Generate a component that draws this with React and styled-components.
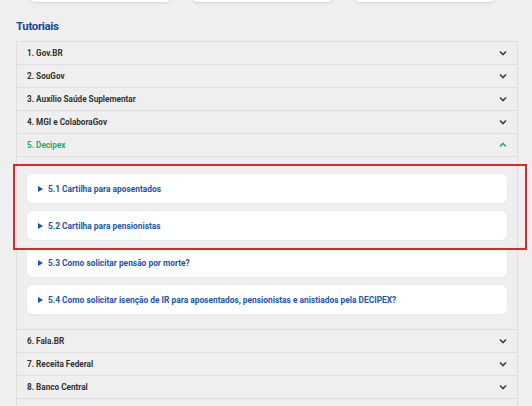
import React from 'react';
import styled, { createGlobalStyle } from 'styled-components';

const sections = [
    { id: 1, title: '1. Gov.BR' },
    { id: 2, title: '2. SouGov' },
    { id: 3, title: '3. Auxílio Saúde Suplementar' },
    { id: 4, title: '4. MGI e ColaboraGov' },
    {
        id: 5,
        title: '5. Decipex',
        open: true,
        items: [
            '5.1 Cartilha para aposentados',
            '5.2 Cartilha para pensionistas',
            '5.3 Como solicitar pensão por morte?',
            '5.4 Como solicitar isenção de IR para aposentados, pensionistas e anistiados pela DECIPEX?'
        ]
    },
    { id: 6, title: '6. Fala.BR' },
    { id: 7, title: '7. Receita Federal' },
    { id: 8, title: '8. Banco Central' },
    { id: 9, title: '9. INSS' }
];

const Chevron = ({ up }) => (
    <svg width='8' height='6' viewBox='0 0 8 6'>
        <path
            d={up ? 'M1 4.5 L4 1.5 L7 4.5' : 'M1 1.5 L4 4.5 L7 1.5'}
            fill='none'
            stroke='currentColor'
            strokeWidth='1.6'
        />
    </svg>
);

const App = () => {
    // first two links of the open section are framed together
    const renderItems = (items) => {
        const highlighted = items.slice(0, 2);
        const rest = items.slice(2);
        return (
            <Panel>
                <Highlight>
                    {highlighted.map((label) => (
                        <LinkCard key={label}>{label}</LinkCard>
                    ))}
                </Highlight>
                {rest.map((label) => (
                    <LinkCard key={label}>{label}</LinkCard>
                ))}
            </Panel>
        );
    };

    return (
        <React.Fragment>
            <GlobalStyle />
            <TopCards>
                <TopCard />
                <TopCard />
                <TopCard />
            </TopCards>
            <Page>
                <Title>Tutoriais</Title>
                <Accordion>
                    {sections.map((section) => (
                        <Section key={section.id}>
                            <Header open={section.open}>
                                <span>{section.title}</span>
                                <Chevron up={section.open} />
                            </Header>
                            {section.open && renderItems(section.items)}
                        </Section>
                    ))}
                </Accordion>
            </Page>
        </React.Fragment>
    );
};

const GlobalStyle = createGlobalStyle`
    html, body {
        margin: 0;
        background: #efefef;
        font-family: Roboto, 'Liberation Sans', sans-serif;
        overflow: hidden;
    }
`;

const TopCards = styled.div`
    display: grid;
    grid-template-columns: repeat(3, 1fr);
    column-gap: 21px;
    padding: 0 37px 0 30px;
`;

const TopCard = styled.div`
    height: 40px;
    margin-top: -38px;
    background: #fff;
    border-radius: 0 0 5px 5px;
    box-shadow: 0 1px 3px rgba(0, 0, 0, 0.12);
`;

const Page = styled.div`
    padding: 0 14px 0 16px;
`;

const Title = styled.h2`
    margin: 16px 0 0;
    font-size: 11.5px;
    line-height: 16px;
    font-weight: 700;
    letter-spacing: -0.35px;
    color: #16479e;
`;

const Accordion = styled.div`
    margin-top: 7px;
    border: 1px solid #dedede;
    border-bottom: none;
`;

const Section = styled.div`
    border-bottom: 1px solid #dedede;
`;

const Header = styled.div`
    height: 22px;
    display: flex;
    align-items: center;
    justify-content: space-between;
    padding: 0 10px 0 10px;
    font-size: 8.2px;
    font-weight: 700;
    color: ${(props) => (props.open ? '#2aa86c' : '#333')};

    & svg {
        color: ${(props) => (props.open ? '#2aa86c' : '#3d3d3d')};
    }
`;

const Panel = styled.div`
    position: relative;
    display: flex;
    flex-direction: column;
    gap: 8px;
    padding: 17px 10px 15px 10px;
    border-top: 1px solid #dedede;
`;

const Highlight = styled.div`
    position: relative;
    display: flex;
    flex-direction: column;
    gap: 8px;

    &::before {
        content: '';
        position: absolute;
        top: -10px;
        bottom: -10px;
        left: -14px;
        right: -20px;
        border: 2px solid #e3242b;
        pointer-events: none;
    }
`;

const LinkCard = styled.div`
    height: 29px;
    display: flex;
    align-items: center;
    padding-left: 11px;
    background: #fff;
    border-radius: 6px;
    box-shadow: 0 0 0 1px #e8ebf0, 0 1px 2px rgba(0, 0, 0, 0.06);
    font-size: 8.4px;
    font-weight: 700;
    color: #1a55b0;

    &::before {
        content: '';
        width: 0;
        height: 0;
        margin-right: 5px;
        border-top: 3px solid transparent;
        border-bottom: 3px solid transparent;
        border-left: 5px solid #1a55b0;
    }
`;

export default App;
